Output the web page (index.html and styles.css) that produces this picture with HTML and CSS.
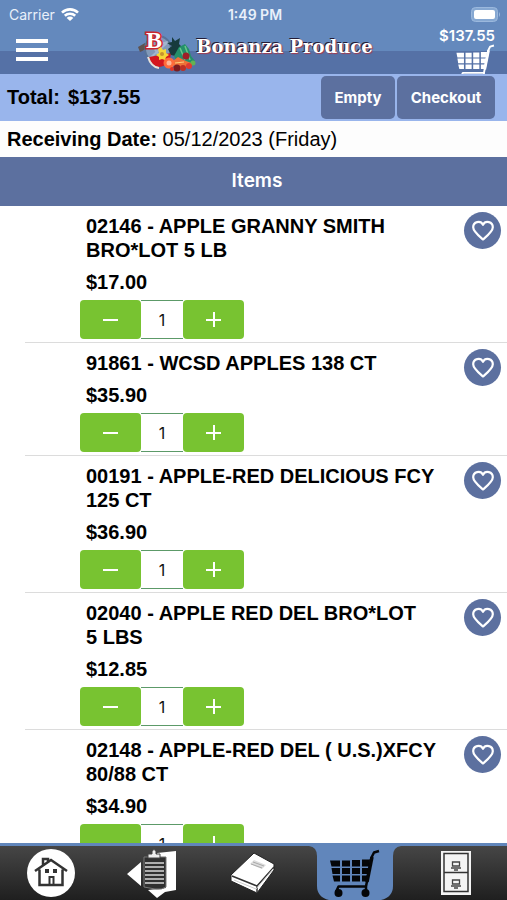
FILE: index.html
```html
<!DOCTYPE html>
<html lang="en">
<head>
<meta charset="utf-8">
<meta name="viewport" content="width=device-width, initial-scale=1">
<title>Bonanza Produce</title>
<link rel="stylesheet" href="styles.css">
</head>
<body>
<svg class="defs" width="0" height="0" aria-hidden="true">
  <symbol id="cart" viewBox="0 0 50 48">
    <path d="M0 11.500h10v6H1.500zM12 11.500h8v6h-8zM22 11h8v6.500h-8zM32 10.500h8l-1 7h-7zM1.500 19h8.500v6H2.500zM12 19h8v6h-8zM22 19h8v6h-8zM32 19h7l-1 6h-6zM2.500 26.500h7.500v6H4zM12 26.500h8v6h-8zM22 26.500h8v6h-8zM32 26.500h6l-1 6h-5z" fill="currentColor"/>
    <path d="M49 2l-5 1.500-2.500 5L36 37.500H8.500L6 43M36 37.500V43" fill="none" stroke="currentColor" stroke-width="2.500" stroke-linejoin="round"/>
    <path d="M42 8L37 33" fill="none" stroke="currentColor" stroke-width="3.500"/>
    <circle cx="8.500" cy="44" r="4" fill="currentColor"/><circle cx="35.500" cy="44" r="4" fill="currentColor"/>
  </symbol>
  <symbol id="heart" viewBox="0 0 24 24">
    <path d="M12 20.500C7 16.200 2.200 12.500 2.200 8.300A5.200 5.200 0 0 1 12 5.800a5.200 5.200 0 0 1 9.800 2.500c0 4.200-4.800 7.900-9.800 12.200z" fill="none" stroke="currentColor" stroke-width="2.200" stroke-linejoin="round"/>
  </symbol>
</svg>

<header class="header">
  <div class="status">
    <div class="carrier">Carrier
      <svg width="18" height="13" viewBox="0 0 18 13" aria-hidden="true"><path d="M1 4.600a11.500 11.500 0 0 1 16 0M3.800 7.800a7.500 7.500 0 0 1 10.400 0" fill="none" stroke="#fff" stroke-width="2.600"/><path d="M9 13L5.700 9.900a4.500 4.500 0 0 1 6.600 0z" fill="#fff"/></svg>
    </div>
    <div class="clock">1:49 PM</div>
    <svg class="battery" width="30" height="15" viewBox="0 0 30 15" aria-hidden="true"><rect x=".5" y=".5" width="26" height="14" rx="4" fill="#86a8d2" stroke="#9bb8dd"/><rect x="3" y="3" width="21" height="9" rx="2" fill="#fff"/><path d="M28 5q2 2.500 0 5z" fill="#9bb8dd"/></svg>
  </div>
  <div class="nav">
    <button class="menu" aria-label="Menu"><span></span><span></span><span></span></button>
    <div class="brand">
      <svg width="58" height="46" viewBox="4 0 58 46" aria-hidden="true">
        <path d="M4 19l7-4 3 2-1 4-7 3z" fill="#5f5350"/>
        <circle cx="24" cy="21" r="13" fill="#8199b9" stroke="#587398" stroke-width="2"/>
        <path d="M14 11l16 24M12 20l22-6M15 31L34 14" stroke="#b7c8dc" stroke-width="2" opacity=".6"/>
        <path d="M15 29l22-4q-1 13-12 14-8-1-10-10z" fill="#d3171f"/><path d="M14 29q3 10 11 11" fill="none" stroke="#e8e3da" stroke-width="2"/>
        <path d="M38 9l3 4 5-3-1 6 3 3-4 4 2 6-9-2-3-6 4-3-5-3 5-1z" fill="#173b3d"/>
        <path d="M45 19l6-3 4 5 2 7 4 5-6 5-12-4-3-6z" fill="#23906a"/><path d="M46 20l5 12M51 18l5 14" stroke="#6bc58a" stroke-width="1.500"/>
        <circle cx="52" cy="28" r="3.500" fill="#a01f27"/><path d="M39 33l5-4 8 4 8 3-8 4-12-2z" fill="#ef7138"/><path d="M41 35l9-1" stroke="#ffd07a"/>
        <circle cx="35" cy="35" r="5.500" fill="#ff6b3b"/><circle cx="35" cy="35" r="2.500" fill="#ffb696"/>
        <circle cx="43" cy="40" r="3.500" fill="#7d1c1f"/><circle cx="49" cy="40" r="3" fill="#bf3024"/><circle cx="38" cy="41" r="2" fill="#e23325"/><circle cx="59" cy="35" r="2.500" fill="#63b253"/><circle cx="55" cy="38" r="3" fill="#e13931"/>
        <text x="20" y="20" class="monogram">B</text>
        <path d="M27 19l2 3 3-1v4l3 2-3 2-1 3-3-1-3 1v-3l-3-2 3-2-1-4z" fill="#f5d638"/><circle cx="28" cy="26" r="2" fill="#c7932e"/>
      </svg>
      <span class="wordmark">Bonanza Produce</span>
    </div>
    <a class="cart-link" href="#cart-page"><span>$137.55</span>
      <svg width="39" height="30" viewBox="0 0 50 39" aria-hidden="true"><use href="#cart" width="50" height="48"/></svg>
    </a>
  </div>
</header>

<section class="summary">
  <p class="total"><span>Total:</span><span>$137.55</span></p>
  <div class="actions"><button>Empty</button><button class="checkout">Checkout</button></div>
</section>
<p class="receiving"><b>Receiving Date:</b> 05/12/2023 (Friday)</p>
<h1 class="heading">Items</h1>

<main class="list">
  <article class="item">
    <h2>02146 - APPLE GRANNY SMITH BRO*LOT 5&nbsp;LB</h2>
    <button class="favorite" aria-label="Add to favorites"><svg width="24" height="24"><use href="#heart"/></svg></button>
    <p class="price">$17.00</p>
    <div class="stepper"><button class="minus" aria-label="Decrease"></button><input type="text" inputmode="numeric" value="1" aria-label="Quantity"><button class="plus" aria-label="Increase"></button></div>
  </article>
  <article class="item">
    <h2>91861 - WCSD APPLES 138 CT</h2>
    <button class="favorite" aria-label="Add to favorites"><svg width="24" height="24"><use href="#heart"/></svg></button>
    <p class="price">$35.90</p>
    <div class="stepper"><button class="minus" aria-label="Decrease"></button><input type="text" inputmode="numeric" value="1" aria-label="Quantity"><button class="plus" aria-label="Increase"></button></div>
  </article>
  <article class="item">
    <h2>00191 - APPLE-RED DELICIOUS FCY 125 CT</h2>
    <button class="favorite" aria-label="Add to favorites"><svg width="24" height="24"><use href="#heart"/></svg></button>
    <p class="price">$36.90</p>
    <div class="stepper"><button class="minus" aria-label="Decrease"></button><input type="text" inputmode="numeric" value="1" aria-label="Quantity"><button class="plus" aria-label="Increase"></button></div>
  </article>
  <article class="item">
    <h2>02040 - APPLE RED DEL BRO*LOT 5&nbsp;LBS</h2>
    <button class="favorite" aria-label="Add to favorites"><svg width="24" height="24"><use href="#heart"/></svg></button>
    <p class="price">$12.85</p>
    <div class="stepper"><button class="minus" aria-label="Decrease"></button><input type="text" inputmode="numeric" value="1" aria-label="Quantity"><button class="plus" aria-label="Increase"></button></div>
  </article>
  <article class="item">
    <h2>02148 - APPLE-RED DEL ( U.S.)XFCY 80/88 CT</h2>
    <button class="favorite" aria-label="Add to favorites"><svg width="24" height="24"><use href="#heart"/></svg></button>
    <p class="price">$34.90</p>
    <div class="stepper"><button class="minus" aria-label="Decrease"></button><input type="text" inputmode="numeric" value="1" aria-label="Quantity"><button class="plus" aria-label="Increase"></button></div>
  </article>
</main>

<nav class="tabs">
  <a href="#home" aria-label="Home">
    <svg width="50" height="50" viewBox="0 0 50 50"><circle cx="25" cy="25" r="24" fill="#fff"/><g fill="none" stroke="#333" stroke-width="2.500"><path d="M9 23L25 12l16 11M13.500 21.500V37h23V21.500M17 17v-6h5v3"/></g><path d="M19 21h4v4h-4zM27 21h4v4h-4z" fill="#333"/><path d="M23.500 37v-8h4v8" fill="none" stroke="#333" stroke-width="2"/></svg>
  </a>
  <a href="#orders" aria-label="Orders">
    <svg width="50" height="50" viewBox="0 0 50 50"><path d="M0 26L14 14v24zM30 5l19-2v39l-11 2-8 6-9-8 18-2z" fill="#fff"/><path d="M17 9h22v30q-4 3-11 2l-11-2z" fill="#303030" stroke="#777"/><path d="M18 15h19M18 19h19M18 23h19M18 27h19M18 31h19M18 35h19" stroke="#d8d8d8" stroke-width="1.500"/><path d="M21 10V6h4V3q2-3 4 0v3h4v4z" fill="#eee" stroke="#444"/></svg>
  </a>
  <a href="#catalog" aria-label="Catalog">
    <svg width="46" height="42" viewBox="0 0 46 42"><path d="M1 23L24 1l20 11v6L27 41 1 29z" fill="#fff" stroke="#222"/><path d="M2 24l25 10 17-19M27 34v6" fill="none" stroke="#333" stroke-width="1.500"/><path d="M4 28l22 9 17-20" fill="none" stroke="#ccc"/><path d="M20 12l4-4 12 5-4 4z" fill="#ddd"/><path d="M23 10l11 4M21 12l11 4" stroke="#aaa"/></svg>
  </a>
  <a class="active" href="#cart-page" aria-label="Cart">
    <svg class="tab-shape" viewBox="0 0 92 54" preserveAspectRatio="none" aria-hidden="true"><path d="M0 0q8 1 8 10v30q0 11 12 14h52q12-3 12-14V10q0-9 8-10z" fill="#6186bb"/></svg>
    <svg class="tab-cart" width="50" height="48"><use href="#cart"/></svg>
  </a>
  <a href="#files" aria-label="Files">
    <svg width="30" height="44" viewBox="0 0 30 44"><path d="M0 0h30v44H0z" fill="#f4f4f4"/><path d="M3 2.500h24v38H3zM3 21.500h24" fill="none" stroke="#333" stroke-width="1.500"/><g id="drawer" fill="none" stroke="#444" stroke-width="1.300"><path d="M11.500 11h7v4h-7zM10 17h10M13 19h4"/></g><use href="#drawer" y="18"/></svg>
  </a>
</nav>
</body>
</html>
```

FILE: styles.css
```css
* { box-sizing: border-box; }
body {
  margin: 0;
  height: 100vh;
  display: flex;
  flex-direction: column;
  background: #fff;
  color: #000;
  font-family: "Liberation Sans", Arial, sans-serif;
}
h1, h2, p { margin: 0; }
button { border: 0; padding: 0; font: inherit; color: inherit; cursor: pointer; }
svg { display: block; }
.defs { position: absolute; }

.header {
  flex: none;
  color: #fff;
  font-family: Inter, sans-serif;
  background: linear-gradient(#6489bd 0 51px, #5571a6 51px);
}
.status {
  display: grid;
  grid-template-columns: 1fr auto 1fr;
  align-items: center;
  height: 28px;
  padding: 0 6px 0 9px;
  font-size: 14px;
}
.carrier { display: flex; align-items: center; gap: 6px; color: #e9f0fa; }
.clock { font-weight: 600; color: #e9f0fa; }
.battery { justify-self: end; }
.nav {
  display: grid;
  grid-template-columns: 1fr auto 1fr;
  height: 46px;
  padding: 0 12px 0 16px;
}
.menu {
  display: flex;
  flex-direction: column;
  gap: 5px;
  width: 32px;
  padding-top: 11px;
  background: none;
}
.menu span { height: 4px; background: #fff; }
.brand { display: flex; align-items: flex-start; }
.monogram {
  fill: #fff;
  stroke: #c9252c;
  stroke-width: 3px;
  paint-order: stroke;
  text-anchor: middle;
  font: bold 24px "Liberation Serif", serif;
}
.wordmark {
  font: bold 18px/38px "DejaVu Serif", serif;
  text-shadow: -1px -1px 0 #241c35, 1px 1px 1px #a33b50;
}
.cart-link {
  display: flex;
  flex-direction: column;
  align-items: flex-end;
  color: #fff;
  font-size: 15px;
  font-weight: 600;
  line-height: 16px;
  text-decoration: none;
}

.summary {
  flex: none;
  display: flex;
  justify-content: space-between;
  align-items: center;
  height: 47px;
  padding: 0 12px 0 7px;
  background: #99b5ec;
}
.total { display: flex; gap: 8px; font-size: 20px; font-weight: bold; }
.actions { display: flex; gap: 2px; }
.actions button {
  width: 74px;
  height: 43px;
  border-radius: 5px;
  background: #5c709f;
  color: #fff;
  font: 700 15px Inter, sans-serif;
}
.actions .checkout { width: 98px; }
.receiving {
  flex: none;
  padding: 0 7px;
  background: #fdfdfd;
  font-size: 20px;
  line-height: 36px;
}
.heading {
  flex: none;
  padding: 0 7px 2px 14px;
  background: #5c709f;
  color: #fff;
  font: 600 19px/47px Inter, sans-serif;
  text-align: center;
}

.list { flex: 1; min-height: 0; overflow-y: auto; scrollbar-width: none; }
.item {
  display: grid;
  grid-template-columns: 1fr 37px;
  column-gap: 24px;
  margin-left: 25px;
  padding: 8px 6px 3px 61px;
  border-bottom: 1px solid #dcdcdc;
  font-size: 20px;
  font-weight: bold;
  line-height: 24px;
}
.item h2 { font: inherit; }
.favorite {
  display: grid;
  place-items: center;
  grid-column: 2;
  grid-row: 1 / 3;
  align-self: start;
  height: 37px;
  margin-top: -2px;
  border-radius: 50%;
  background: #5c709f;
  color: #fff;
}
.price { grid-column: 1; padding-top: 8px; }
.stepper { display: flex; grid-column: 1; margin: 6px 0 0 -6px; }
.stepper button {
  display: grid;
  place-items: center;
  width: 61px;
  height: 39px;
  border-radius: 4px;
  background: #78c331;
}
.stepper button::before,
.stepper .plus::after { content: ""; grid-area: 1 / 1; background: #fff; }
.stepper button::before { width: 15px; height: 2px; }
.stepper .plus::after { width: 2px; height: 15px; }
.stepper input {
  width: 42px;
  height: 39px;
  padding: 0;
  border: solid #5c9a68;
  border-width: 1px 0;
  background: #fff;
  color: #111;
  font: 16px Inter, sans-serif;
  text-align: center;
}

.tabs {
  flex: none;
  display: grid;
  grid-template-columns: repeat(5, 1fr);
  height: 57px;
  border-top: 3px solid #6186bb;
  background: linear-gradient(#464646, #1f1f1f);
}
.tabs a { display: grid; grid-template-rows: 54px; place-items: center; color: #050608; }
.tabs .active { position: relative; }
.tab-shape { position: absolute; top: 0; left: 50%; width: 92px; height: 100%; margin-left: -46px; }
.tab-cart { position: relative; }
```
